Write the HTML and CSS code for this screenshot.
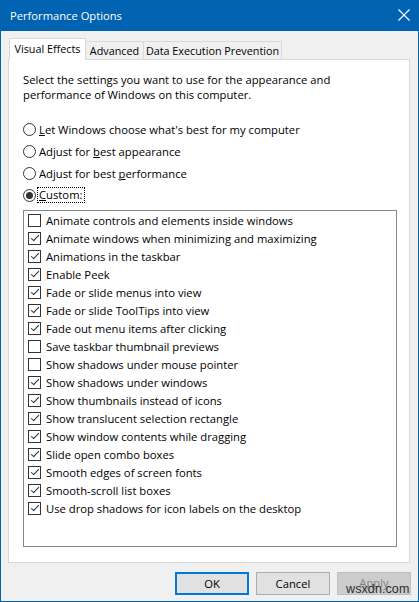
FILE: index.html
```html
<!DOCTYPE html>
<html lang="en">
<head>
<meta charset="utf-8">
<title>Performance Options</title>
<link rel="stylesheet" href="styles.css">
</head>
<body>
<div class="window">
  <div class="titlebar">
    <span class="title">Performance Options</span>
    <svg class="close" width="12" height="12" viewBox="0 0 12 12" aria-hidden="true">
      <path d="M0.5 0.5 L11.5 11.5 M11.5 0.5 L0.5 11.5" stroke="#fff" stroke-width="1.2" fill="none"/>
    </svg>
  </div>
  <div class="frame">
    <div class="tabs">
      <div class="tab active">Visual Effects</div>
      <div class="tab adv">Advanced</div>
      <div class="tab dep">Data Execution Prevention</div>
    </div>
    <div class="panel">
      <p class="intro">Select the settings you want to use for the appearance and<br>performance of Windows on this computer.</p>
      <div class="radios">
        <div class="radio"><span class="circle"></span><span class="rlabel"><u>L</u>et Windows choose what's best for my computer</span></div>
        <div class="radio"><span class="circle"></span><span class="rlabel">Adjust for <u>b</u>est appearance</span></div>
        <div class="radio"><span class="circle"></span><span class="rlabel">Adjust for best <u>p</u>erformance</span></div>
        <div class="radio"><span class="circle on"></span><span class="rlabel focus"><u>C</u>ustom:</span></div>
      </div>
      <div class="listbox">
        <div class="row"><span class="box"></span>Animate controls and elements inside windows</div>
        <div class="row"><span class="box checked"></span>Animate windows when minimizing and maximizing</div>
        <div class="row"><span class="box checked"></span>Animations in the taskbar</div>
        <div class="row"><span class="box checked"></span>Enable Peek</div>
        <div class="row"><span class="box checked"></span>Fade or slide menus into view</div>
        <div class="row"><span class="box checked"></span>Fade or slide ToolTips into view</div>
        <div class="row"><span class="box checked"></span>Fade out menu items after clicking</div>
        <div class="row"><span class="box"></span>Save taskbar thumbnail previews</div>
        <div class="row"><span class="box"></span>Show shadows under mouse pointer</div>
        <div class="row"><span class="box checked"></span>Show shadows under windows</div>
        <div class="row"><span class="box checked"></span>Show thumbnails instead of icons</div>
        <div class="row"><span class="box checked"></span>Show translucent selection rectangle</div>
        <div class="row"><span class="box checked"></span>Show window contents while dragging</div>
        <div class="row"><span class="box checked"></span>Slide open combo boxes</div>
        <div class="row"><span class="box checked"></span>Smooth edges of screen fonts</div>
        <div class="row"><span class="box checked"></span>Smooth-scroll list boxes</div>
        <div class="row"><span class="box checked"></span>Use drop shadows for icon labels on the desktop</div>
      </div>
    </div>
    <div class="buttons">
      <div class="btn default">OK</div>
      <div class="btn">Cancel</div>
      <div class="btn disabled">Apply</div>
    </div>
  </div>
  <div class="watermark">wsxdn.com</div>
</div>
</body>
</html>
```
FILE: styles.css
```css
* { box-sizing: border-box; }

html, body {
  margin: 0;
  padding: 0;
  background: #f0f0f0;
}

body {
  font-family: "Open Sans", "Noto Sans", sans-serif;
  font-size: 11.25px;
  color: #000;
}

.window {
  position: relative;
  width: 419px;
  height: 602px;
  display: flex;
  flex-direction: column;
  background: #f0f0f0;
}

/* caption bar */
.titlebar {
  height: 31px;
  flex: none;
  background: #0063b1;
  color: #fff;
  display: flex;
  align-items: center;
  padding: 0 10px 1px 10px;
}

.title {
  flex: 1;
  font-size: 11.2px;
}

.close {
  margin-right: -1px;
  margin-top: -1px;
}

/* client area with the thin blue window border */
.frame {
  flex: 1;
  border: 1px solid #0063b1;
  border-top: none;
  padding: 7px 7px 0 7px;
  display: flex;
  flex-direction: column;
}

/* tab strip */
.tabs {
  height: 21px;
  display: flex;
  align-items: flex-end;
  padding-left: 1px;
  font-size: 10.8px;
}

.tab {
  height: 18px;
  display: flex;
  align-items: center;
  justify-content: center;
  border: 1px solid #d9d9d9;
  border-bottom: none;
  border-left: none;
  background: #f0f0f0;
  white-space: nowrap;
}

.tab.active {
  position: relative;
  z-index: 1;
  height: 22px;
  margin-bottom: -1px;
  width: 77px;
  border-left: 1px solid #d9d9d9;
  background: #fff;
  padding-bottom: 2px;
}

.tab.adv { width: 58px; }
.tab.dep { width: 138px; }

/* tab page */
.panel {
  width: 402px;
  height: 504px;
  flex: none;
  background: #fff;
  border: 1px solid #d9d9d9;
  padding: 12px 0 0 14px;
}

.intro {
  margin: 0;
  line-height: 15px;
}

.radios {
  margin-top: 16px;
}

.radio {
  height: 22px;
  display: flex;
  align-items: center;
}

.circle {
  width: 13px;
  height: 13px;
  border: 1px solid #333;
  border-radius: 50%;
  margin-right: 3px;
  display: flex;
  align-items: center;
  justify-content: center;
  flex: none;
}

.circle.on::after {
  content: "";
  width: 7px;
  height: 7px;
  border-radius: 50%;
  background: #333;
}

.rlabel u { text-decoration-thickness: 1px; text-underline-offset: 1px; }

.rlabel.focus {
  outline: 1px dotted #000;
  outline-offset: 0;
  padding: 0 1px;
  margin-left: -1px;
  line-height: 14px;
}

/* list of effects */
.listbox {
  margin-top: 4px;
  width: 374px;
  height: 337px;
  border: 1px solid #828790;
}

.row {
  height: 18px;
  display: flex;
  align-items: center;
  padding-left: 4px;
  white-space: nowrap;
}

.box {
  width: 13px;
  height: 13px;
  border: 1px solid #333;
  margin-right: 5px;
  flex: none;
  position: relative;
}

.box.checked::after {
  content: "";
  position: absolute;
  left: 3.5px;
  top: 0.5px;
  width: 3px;
  height: 7px;
  border-right: 1px solid #333;
  border-bottom: 1px solid #333;
  transform: rotate(40deg) skewX(-4deg);
}

/* dialog buttons */
.buttons {
  margin-top: 9px;
  display: flex;
  justify-content: flex-end;
  gap: 7px;
}

.btn {
  width: 74px;
  height: 23px;
  display: flex;
  align-items: center;
  justify-content: center;
  background: #e1e1e1;
  border: 1px solid #adadad;
}

.btn.default {
  border: 2px solid #0078d7;
}

.btn.disabled {
  background: #cccccc;
  border-color: #bfbfbf;
  color: #838383;
  padding-bottom: 3px;
}

.watermark {
  position: absolute;
  left: 346px;
  top: 582px;
  font-family: "Liberation Sans", Arial, sans-serif;
  font-size: 12.5px;
  color: #2b2b2b;
  letter-spacing: 0.1px;
}
```
